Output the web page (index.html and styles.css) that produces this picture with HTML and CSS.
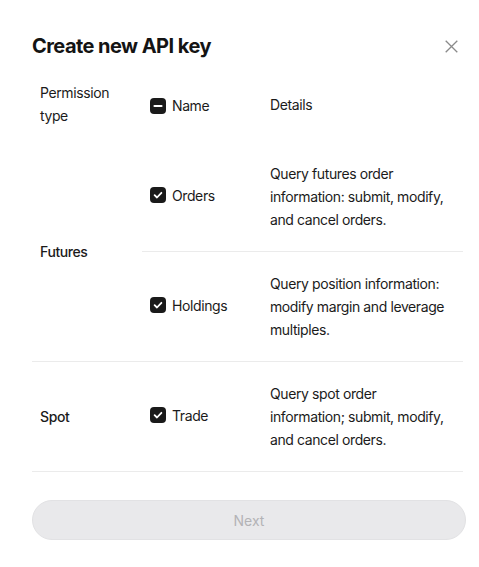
FILE: index.html
```html
<!DOCTYPE html>
<html>
<head>
<meta charset="utf-8">
<link rel="stylesheet" href="styles.css">
</head>
<body>
<div class="dialog">
  <div class="head">
    <h1 class="title">Create new API key</h1>
    <button class="close" aria-label="Close">
      <svg width="13" height="13" viewBox="0 0 13 13"><path d="M0.7 0.7L12.3 12.3M12.3 0.7L0.7 12.3" stroke="#8a8a8a" stroke-width="1.3" fill="none"/></svg>
    </button>
  </div>
  <table class="perm">
    <colgroup><col class="c1"><col class="c2"><col class="c3"></colgroup>
    <thead>
      <tr>
        <th class="type">Permission<br>type</th>
        <th><span class="chk"><span class="box"><svg width="16" height="16" viewBox="0 0 16 16"><path d="M4.5 8H11.5" stroke="#fff" stroke-width="2.2" stroke-linecap="round"/></svg></span>Name</span></th>
        <th>Details</th>
      </tr>
    </thead>
    <tbody>
      <tr>
        <td class="group" rowspan="2">Futures</td>
        <td class="name"><span class="chk"><span class="box"><svg width="16" height="16" viewBox="0 0 16 16"><path d="M4.6 8.2L7 10.5L11.4 5.8" stroke="#fff" stroke-width="1.8" fill="none" stroke-linecap="round" stroke-linejoin="round"/></svg></span>Orders</span></td>
        <td class="det">Query futures order information: submit, modify, and cancel orders.</td>
      </tr>
      <tr>
        <td class="name"><span class="chk"><span class="box"><svg width="16" height="16" viewBox="0 0 16 16"><path d="M4.6 8.2L7 10.5L11.4 5.8" stroke="#fff" stroke-width="1.8" fill="none" stroke-linecap="round" stroke-linejoin="round"/></svg></span>Holdings</span></td>
        <td class="det">Query position information: modify margin and leverage multiples.</td>
      </tr>
      <tr>
        <td class="group">Spot</td>
        <td class="name"><span class="chk"><span class="box"><svg width="16" height="16" viewBox="0 0 16 16"><path d="M4.6 8.2L7 10.5L11.4 5.8" stroke="#fff" stroke-width="1.8" fill="none" stroke-linecap="round" stroke-linejoin="round"/></svg></span>Trade</span></td>
        <td class="det">Query spot order information; submit, modify, and cancel orders.</td>
      </tr>
    </tbody>
  </table>
  <button class="next" disabled>Next</button>
</div>
</body>
</html>
```
FILE: styles.css
```css
html, body {
  margin: 0;
  padding: 0;
  background: #ffffff;
}
body {
  font-family: Inter, "Noto Sans", "Liberation Sans", sans-serif;
  color: #1b1b1b;
}
.dialog {
  padding: 32px 13px 24px 32px;
}
.head {
  display: flex;
  align-items: center;
  justify-content: space-between;
  height: 28px;
  padding-right: 8px;
}
.title {
  margin: 0;
  font-size: 20px;
  font-weight: 700;
  letter-spacing: -0.55px;
  color: #141414;
}
.close {
  border: 0;
  background: none;
  padding: 0;
  width: 13px;
  height: 13px;
  display: flex;
}
.perm {
  width: 431px;
  border-collapse: collapse;
  margin-top: 21px;
  font-size: 14px;
  line-height: 23px;
  letter-spacing: -0.4px;
}
.c1 { width: 110px; }
.c2 { width: 120px; }
.c3 { width: 201px; }
th {
  font-weight: 400;
  text-align: left;
  vertical-align: middle;
  padding: 0 8px 15px;
}
th .chk {
  vertical-align: middle;
  position: relative;
  top: 1px;
}
td {
  padding: 20px 8px;
  vertical-align: middle;
  border-bottom: 1px solid #ebebeb;
}
td.det {
  padding-right: 16px;
}
.group {
  font-weight: 500;
}
.chk {
  display: inline-flex;
  align-items: center;
  gap: 6px;
}
.box {
  width: 16px;
  height: 16px;
  border-radius: 4px;
  background: #1a1a1a;
  display: inline-flex;
}
.next {
  display: block;
  margin-top: 28px;
  width: 434px;
  height: 40px;
  border: 1px solid #e2e2e4;
  border-radius: 20px;
  background: #e9e9eb;
  color: #b3b3b6;
  font-family: Inter, "Noto Sans", "Liberation Sans", sans-serif;
  font-size: 14px;
}
```
